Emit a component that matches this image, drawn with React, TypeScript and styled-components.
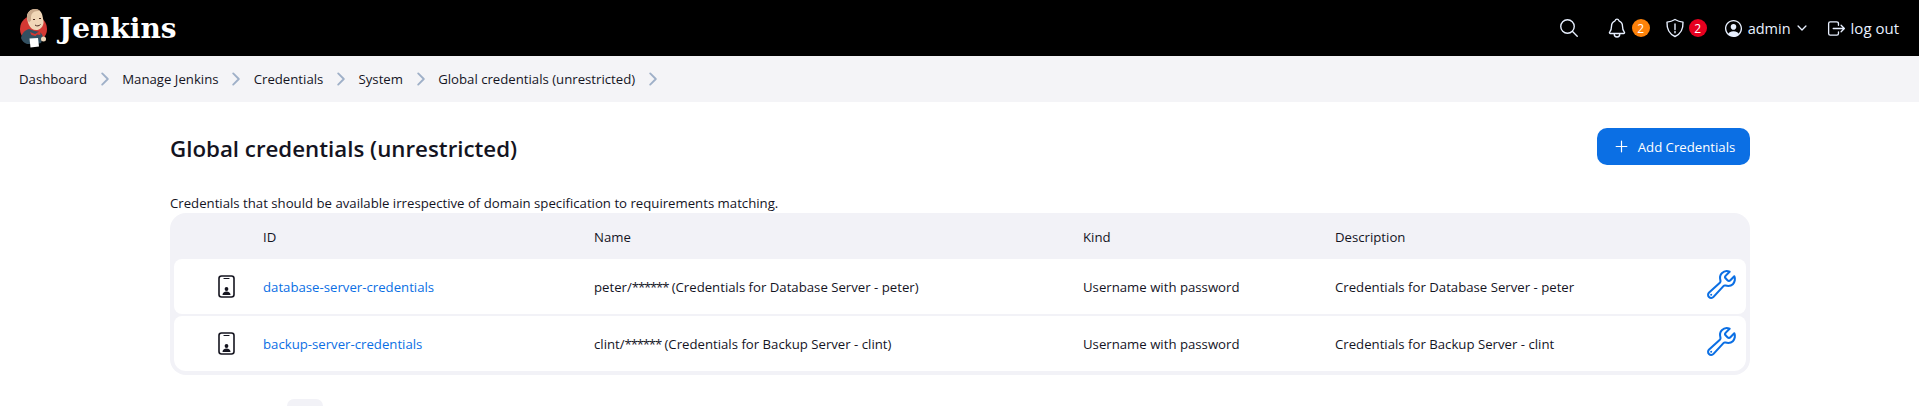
import React from "react"
import styled, { createGlobalStyle } from "styled-components"
import {
  IoSearchOutline,
  IoNotificationsOutline,
  IoPersonCircleOutline,
  IoChevronDownOutline,
  IoLogOutOutline,
  IoChevronForwardOutline,
  IoAddOutline,
  IoBuildOutline,
} from "react-icons/io5"

const FONT = `"Open Sans", "Noto Sans", "Liberation Sans", sans-serif`

const GlobalStyle = createGlobalStyle`
  html, body {
    margin: 0;
    padding: 0;
    height: 407px;
    overflow: hidden;
    background: #fff;
    color: #14141f;
    font-family: ${FONT};
    font-size: 13.2px;
  }
`

//-- Header
const Header = styled.header`
  height: 56px;
  background: #000;
  display: flex;
  align-items: center;
  padding: 0 20px 0 19px;
`
const Brand = styled.div`
  display: flex;
  align-items: center;
  gap: 10px;
  flex: 1;
`
const BrandName = styled.span`
  color: #fff;
  font-family: "DejaVu Serif", "Liberation Serif", serif;
  font-weight: 700;
  font-size: 28px;
`
const HeaderItem = styled.div<{ $left: number }>`
  display: flex;
  align-items: center;
  gap: 4px;
  margin-left: ${(p) => p.$left}px;
  color: #e8f0ff;
  font-size: 15px;
`
const AdminName = styled.span`
  font-size: 14.5px;
`
const Badge = styled.span<{ $color: string }>`
  width: 18px;
  height: 18px;
  border-radius: 50%;
  background: ${(p) => p.$color};
  color: #fff;
  font-size: 12px;
  display: flex;
  align-items: center;
  justify-content: center;
`

//-- Breadcrumbs
const Breadcrumbs = styled.nav`
  height: 46px;
  background: #f4f4f7;
  display: flex;
  align-items: center;
  padding-left: 19px;
  gap: 7.6px;
`
const Crumb = styled.span`
  color: #14141f;
  font-size: 13.2px;
`
const CrumbArrow = styled(IoChevronForwardOutline)`
  color: #9fb0c8;
  width: 20px;
  height: 20px;
`

//-- Content
const Main = styled.main`
  margin: 0 169px 0 170px;
`
const TitleRow = styled.div`
  display: flex;
  justify-content: space-between;
  align-items: center;
  padding-top: 26px;
`
const Title = styled.h1`
  margin: 0;
  padding-top: 3px;
  font-size: 22.3px;
  font-weight: 600;
  color: #14141f;
`
const AddButton = styled.button`
  height: 37px;
  width: 153px;
  border: none;
  border-radius: 10px;
  background: #0b6fe4;
  color: #fff;
  font: inherit;
  font-weight: 500;
  display: flex;
  align-items: center;
  justify-content: center;
  gap: 7px;
`
const Intro = styled.p`
  margin: 29px 0 0;
  line-height: 18px;
`
const Table = styled.div`
  margin-top: 1px;
  background: #f2f2f7;
  border-radius: 16px;
  padding: 0 4px 4px;
`
const Row = styled.div<{ $head?: boolean }>`
  display: grid;
  grid-template-columns: 89px 331px 489px 252px 1fr 48px;
  align-items: center;
  height: ${(p) => (p.$head ? "46px" : "55px")};
  padding-top: ${(p) => (p.$head ? "2px" : "0")};
  box-sizing: border-box;
  background: ${(p) => (p.$head ? "transparent" : "#fff")};
  border-radius: 8px;
  margin-bottom: ${(p) => (p.$head ? "0" : "2px")};
  &:last-child {
    margin-bottom: 0;
    border-radius: 8px 8px 12px 12px;
  }
`
const IconCell = styled.div`
  display: flex;
  justify-content: flex-end;
  padding-right: 28px;
`
const IdLink = styled.a`
  color: #0b6fe4;
  text-decoration: none;
`
const Mask = styled.span`
  letter-spacing: -1.2px;
`
const ActionCell = styled.div`
  display: flex;
  justify-content: center;
  margin: -5px 2px 0 0;
  color: #0b6fe4;
`
const PagerStub = styled.div`
  width: 36px;
  height: 7px;
  margin: 24px 0 0 117px;
  background: #f2f2f7;
  border-radius: 12px 12px 0 0;
`

const PhoneIcon = () => (
  <svg width="17" height="23" viewBox="0 0 17 23" fill="none">
    <rect x="1" y="1" width="15" height="21" rx="2.5" stroke="#14141f" strokeWidth="1.6" />
    <path d="M6 3.500h5" stroke="#14141f" strokeWidth="1.2" strokeLinecap="round" />
    <circle cx="8.500" cy="14" r="1.900" fill="#14141f" />
    <path d="M4.500 20c0-2.200 1.700-3.500 4-3.500s4 1.300 4 3.500z" fill="#14141f" />
  </svg>
)

const ShieldIcon = () => (
  <svg width="20" height="20" viewBox="0 0 20 20" fill="none" stroke="currentColor" strokeWidth="1.4">
    <path d="M10 1.500c2.500 1.500 5 2.300 8 2.600.3 6.900-2.400 11.900-8 14.400C4.400 16 1.700 11 2 4.100c3-.3 5.500-1.100 8-2.600z" strokeLinejoin="round" />
    <path d="M10 6v5.500M10 13.500v1.300" strokeLinecap="round" />
  </svg>
)

const JenkinsLogo = () => (
  <svg width="30" height="40" viewBox="0 0 30 40">
    <circle cx="14.500" cy="21" r="13.500" fill="#d33833" />
    <path d="M2 30c1-5 4-8 8-9l6 2c5 0 8 3 8 7l-2 5-4 1H8c-3-1-5-3-6-6z" fill="#335061" />
    <path d="M8 10c-.5-5 3-9 8-9 4 0 7 3 7.500 7l1 5c.5 4-2 8-6 9-4 .5-7-1.500-8.500-5-1-2-1.500-4-2-7z" fill="#f0d6b7" />
    <path d="M8 10c-.5-5 3-9 8-9 2 0 4 .8 5 2-4-.5-7 .5-8.500 3.500-.7 2-.5 4-.5 6l-2 2c-1-1.500-1.700-3-2-4.500z" fill="#c9a98c" />
    <path d="M14 11.500h2M20 10.500h2M16 17c2 1.500 4 1 5.500-.5" stroke="#49281f" strokeWidth="1" fill="none" />
    <path d="M11 24l5 2 5-3 .5 4-3.500-.5-1.500 1.500-4-1z" fill="#d33833" />
    <path d="M10.500 30.500l8.500-.5 1 8.500-8.500 1z" fill="#fff" />
    <circle cx="24.500" cy="31" r="2.500" fill="#f0d6b7" />
  </svg>
)

const crumbs = ["Dashboard", "Manage Jenkins", "Credentials", "System", "Global credentials (unrestricted)"]

const credentials = [
  {
    id: "database-server-credentials",
    user: "peter",
    label: "(Credentials for Database Server - peter)",
    description: "Credentials for Database Server - peter",
  },
  {
    id: "backup-server-credentials",
    user: "clint",
    label: "(Credentials for Backup Server - clint)",
    description: "Credentials for Backup Server - clint",
  },
]

export default function App()
{
  return (
    <>
      <GlobalStyle />
      <Header>
        <Brand>
          <JenkinsLogo />
          <BrandName>Jenkins</BrandName>
        </Brand>
        <HeaderItem $left={0}>
          <IoSearchOutline size={22} />
        </HeaderItem>
        <HeaderItem $left={26}>
          <IoNotificationsOutline size={22} />
          <Badge $color="#fe820a">2</Badge>
        </HeaderItem>
        <HeaderItem $left={15}>
          <ShieldIcon />
          <Badge $color="#e6001f">2</Badge>
        </HeaderItem>
        <HeaderItem $left={16}>
          <IoPersonCircleOutline size={21} />
          <AdminName>admin</AdminName>
          <IoChevronDownOutline size={14} />
        </HeaderItem>
        <HeaderItem $left={17}>
          <IoLogOutOutline size={21} />
          <span>log out</span>
        </HeaderItem>
      </Header>
      <Breadcrumbs>
        {crumbs.map((c) => (
          <React.Fragment key={c}>
            <Crumb>{c}</Crumb>
            <CrumbArrow />
          </React.Fragment>
        ))}
      </Breadcrumbs>
      <Main>
        <TitleRow>
          <Title>Global credentials (unrestricted)</Title>
          <AddButton>
            <IoAddOutline size={19} />
            Add Credentials
          </AddButton>
        </TitleRow>
        <Intro>Credentials that should be available irrespective of domain specification to requirements matching.</Intro>
        <Table>
          <Row $head>
            <div />
            <div>ID</div>
            <div>Name</div>
            <div>Kind</div>
            <div>Description</div>
            <div />
          </Row>
          {credentials.map((c) => (
            <Row key={c.id}>
              <IconCell>
                <PhoneIcon />
              </IconCell>
              <IdLink href="#">{c.id}</IdLink>
              <div>
                {c.user}/<Mask>******</Mask> {c.label}
              </div>
              <div>Username with password</div>
              <div>{c.description}</div>
              <ActionCell>
                <IoBuildOutline size={33} />
              </ActionCell>
            </Row>
          ))}
        </Table>
        <PagerStub />
      </Main>
    </>
  )
}
